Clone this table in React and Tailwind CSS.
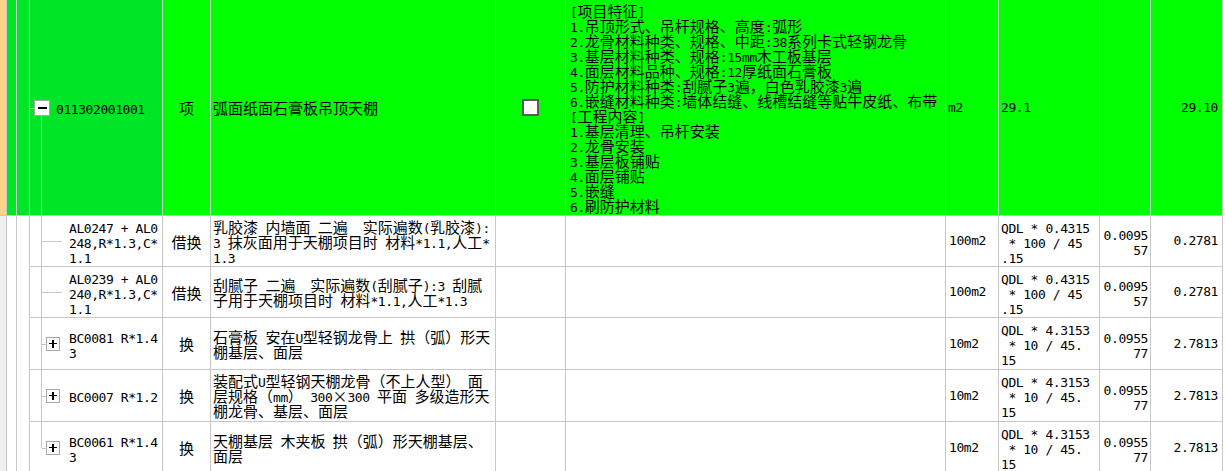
import React from 'react';

const COLS = 'grid grid-cols-[7px_10px_13px_133px_48px_285px_70px_380px_53px_101px_51px_72px]';

// ascii runs get the narrow mono face, the rest stays CJK
function T({ s }) {
  return s.split(/([\x20-\x7e]+)/).map((p, i) =>
    /^[\x20-\x7e]+$/.test(p) ? (
      <span key={i} className="font-['DejaVu_Sans_Mono',monospace] text-[13px] tracking-[-0.43px] leading-[0]">
        {p}
      </span>
    ) : (
      p
    )
  );
}

function Lines({ lines, className = '' }) {
  return (
    <div className={className}>
      {lines.map((l, i) => (
        <div key={i} className="whitespace-pre">
          <T s={l} />
        </div>
      ))}
    </div>
  );
}

const features = [
  '[项目特征]',
  '1.吊顶形式、吊杆规格、高度:弧形',
  '2.龙骨材料种类、规格、中距:38系列卡式轻钢龙骨',
  '3.基层材料种类、规格:15mm木工板基层',
  '4.面层材料品种、规格:12厚纸面石膏板',
  '5.防护材料种类:刮腻子3遍，白色乳胶漆3遍',
  '6.嵌缝材料种类:墙体结缝、线槽结缝等贴牛皮纸、布带',
  '[工程内容]',
  '1.基层清理、吊杆安装',
  '2.龙骨安装',
  '3.基层板铺贴',
  '4.面层铺贴',
  '5.嵌缝',
  '6.刷防护材料',
];

const rows = [
  {
    h: 'h-[51px]',
    tree: 'dash',
    code: ['AL0247 + AL0', '248,R*1.3,C*', '1.1'],
    kind: '借换',
    name: ['乳胶漆 内墙面 二遍  实际遍数(乳胶漆):', '3 抹灰面用于天棚项目时 材料*1.1,人工*', '1.3'],
    unit: '100m2',
    expr: ['QDL * 0.4315', ' * 100 / 45', '.15'],
    qty: ['0.0095', '57'],
    total: '0.2781',
  },
  {
    h: 'h-[51px]',
    tree: 'dash',
    code: ['AL0239 + AL0', '240,R*1.3,C*', '1.1'],
    kind: '借换',
    name: ['刮腻子 二遍  实际遍数(刮腻子):3 刮腻', '子用于天棚项目时 材料*1.1,人工*1.3'],
    unit: '100m2',
    expr: ['QDL * 0.4315', ' * 100 / 45', '.15'],
    qty: ['0.0095', '57'],
    total: '0.2781',
  },
  {
    h: 'h-[52px]',
    tree: 'plus',
    code: ['BC0081 R*1.4', '3'],
    kind: '换',
    name: ['石膏板 安在U型轻钢龙骨上 拱（弧）形天', '棚基层、面层'],
    unit: '10m2',
    expr: ['QDL * 4.3153', ' * 10 / 45.', '15'],
    qty: ['0.0955', '77'],
    total: '2.7813',
  },
  {
    h: 'h-[52px]',
    tree: 'plus',
    code: ['BC0007 R*1.2'],
    kind: '换',
    name: ['装配式U型轻钢天棚龙骨（不上人型） 面', '层规格（mm） 300×300 平面 多级造形天', '棚龙骨、基层、面层'],
    unit: '10m2',
    expr: ['QDL * 4.3153', ' * 10 / 45.', '15'],
    qty: ['0.0955', '77'],
    total: '2.7813',
  },
  {
    h: 'h-[52px]',
    tree: 'plus',
    last: true,
    code: ['BC0061 R*1.4', '3'],
    kind: '换',
    name: ['天棚基层 木夹板 拱（弧）形天棚基层、', '面层'],
    unit: '10m2',
    expr: ['QDL * 4.3153', ' * 10 / 45.', '15'],
    qty: ['0.0955', '77'],
    total: '2.7813',
  },
];

function ChildRow({ r }) {
  const cell = 'border-r border-b border-[#c8c8c8] flex items-center';
  return (
    <div className={`${COLS} ${r.h}`}>
      <div className="bg-[#f0f0f0] border-r border-[#c8c8c8]" />
      <div className="border-r border-[#c8c8c8]" />
      <div className="border-r border-[#c8c8c8]" />
      <div className={`${cell} relative ${r.tree === 'plus' ? 'pl-[16px]' : 'pl-[39px]'}`}>
        <span
          className={`absolute left-[11px] w-px bg-[#c8c8c8] top-0 ${r.last ? 'h-1/2' : 'bottom-0'}`}
        />
        {r.tree === 'dash' ? (
          <span className="absolute left-[12px] top-1/2 w-[20px] h-px bg-[#c8c8c8]" />
        ) : (
          <>
            <span className="absolute left-[12px] top-1/2 w-[4px] h-px bg-[#c8c8c8]" />
            <span className="w-[14px] h-[14px] shrink-0 border border-[#a8a8a8] bg-white flex items-center justify-center">
              <span className="relative w-[8px] h-[8px]">
                <span className="absolute left-0 top-[3px] w-[8px] h-[1.5px] bg-black" />
                <span className="absolute top-0 left-[3.25px] w-[1.5px] h-[8px] bg-black" />
              </span>
            </span>
          </>
        )}
        <Lines lines={r.code} className={r.tree === 'plus' ? 'ml-[9px]' : ''} />
      </div>
      <div className={`${cell} justify-center`}>{r.kind}</div>
      <div className={`${cell} pl-[2px]`}>
        <Lines lines={r.name} />
      </div>
      <div className={cell} />
      <div className={cell} />
      <div className={`${cell} pl-[3px]`}>
        <T s={r.unit} />
      </div>
      <div className={`${cell} pl-[2px]`}>
        <Lines lines={r.expr} />
      </div>
      <div className={`${cell} justify-end pr-[2px]`}>
        <Lines lines={r.qty} className="text-right" />
      </div>
      <div className={`${cell} justify-end pr-[4px]`}>
        <T s={r.total} />
      </div>
    </div>
  );
}

export default function App() {
  const g = 'border-r border-b border-[#c8c8c8] bg-[#00ff00]';
  return (
    <div className="w-[1225px] h-[471px] overflow-hidden bg-white text-black font-['Noto_Sans_CJK_SC',sans-serif] text-[15px] leading-[15px]">
      <div className={`${COLS} h-[216px]`}>
        <div className="bg-[#ffd38c] border-r border-b border-[#c8c8c8]" />
        <div className="bg-[#00e626] border-r border-b border-[#c8c8c8]" />
        <div className="bg-[#00e626] border-r border-b border-[#c8c8c8]" />
        <div className="bg-[#00e626] border-r border-b border-[#c8c8c8] relative flex items-center pl-[4px]">
          <span className="absolute left-0 top-1/2 w-[4px] h-px bg-[#c8c8c8]" />
          <span className="absolute left-[11px] top-[calc(50%+8px)] bottom-0 w-px bg-[#c8c8c8]" />
          <span className="w-4 h-4 shrink-0 border border-[#a8a8a8] bg-white flex items-center justify-center">
            <span className="w-[9px] h-[2px] bg-black" />
          </span>
          <span className="ml-[6px]">
            <T s="011302001001" />
          </span>
        </div>
        <div className={`${g} flex items-center justify-center`}>项</div>
        <div className={`${g} flex items-center pl-[2px]`}>弧面纸面石膏板吊顶天棚</div>
        <div className={`${g} flex items-center justify-center`}>
          <span className="w-[17px] h-[17px] border-2 border-[#5a5a5a] bg-white" />
        </div>
        <div className={`${g} pl-[4px] pt-[3px]`}>
          <Lines lines={features} />
        </div>
        <div className={`${g} flex items-center pl-[2px]`}>
          <T s="m2" />
        </div>
        <div className={`${g} flex items-center pl-[2px]`}>
          <T s="29.1" />
        </div>
        <div className={g} />
        <div className={`${g} flex items-center justify-end pr-[4px]`}>
          <T s="29.10" />
        </div>
      </div>
      {rows.map((r, i) => (
        <ChildRow key={i} r={r} />
      ))}
    </div>
  );
}
